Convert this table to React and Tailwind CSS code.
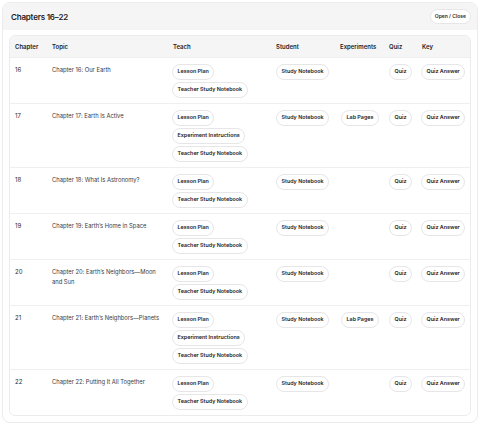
const rows = [
  { n: "16", topic: "Chapter 16: Our Earth", teach: ["Lesson Plan", "Teacher Study Notebook"], lab: false },
  { n: "17", topic: "Chapter 17: Earth Is Active", teach: ["Lesson Plan", "Experiment Instructions", "Teacher Study Notebook"], lab: true },
  { n: "18", topic: "Chapter 18: What Is Astronomy?", teach: ["Lesson Plan", "Teacher Study Notebook"], lab: false },
  { n: "19", topic: "Chapter 19: Earth’s Home in Space", teach: ["Lesson Plan", "Teacher Study Notebook"], lab: false },
  { n: "20", topic: "Chapter 20: Earth’s Neighbors—Moon and Sun", teach: ["Lesson Plan", "Teacher Study Notebook"], lab: false },
  { n: "21", topic: "Chapter 21: Earth’s Neighbors—Planets", teach: ["Lesson Plan", "Experiment Instructions", "Teacher Study Notebook"], lab: true },
  { n: "22", topic: "Chapter 22: Putting It All Together", teach: ["Lesson Plan", "Teacher Study Notebook"], lab: false },
];

const cols = "grid grid-cols-[37px_121px_103px_64px_49px_33px_55px]";

function Pill({ children }) {
  return (
    <span className="inline-flex h-4 items-center rounded-full border border-[#e6e6e8] bg-white px-[4.5px] text-[5.4px] font-semibold leading-none text-[#1c1c1f] whitespace-nowrap">
      {children}
    </span>
  );
}

export default function App() {
  return (
    <div className="bg-white p-[2px] font-['Inter',sans-serif] text-[#1c1c1f]">
      <div className="overflow-hidden rounded-lg border border-[#ececee] bg-white">
        {/* header bar */}
        <div className="flex h-[27px] items-center justify-between bg-[#f5f5f6] pl-[8px] pr-[6px]">
          <h2 className="text-[8px] font-semibold tracking-tight">Chapters 16–22</h2>
          <button className="flex h-[15px] items-center rounded-full border border-[#e6e6e8] bg-white px-[4px] text-[5px] font-semibold text-[#2a2a2e]">
            Open / Close
          </button>
        </div>

        <div className="px-[6px] pb-[6px] pt-[5px]">
          <div className="overflow-hidden rounded-md border border-[#ececee]">
            <div className={`${cols} h-[21px] items-center bg-[#f5f5f6] text-[6px] font-semibold`}>
              <div className="pl-[5px]">Chapter</div>
              <div className="pl-[5px]">Topic</div>
              <div className="pl-[5px]">Teach</div>
              <div className="pl-[5px]">Student</div>
              <div className="pl-[5px]">Experiments</div>
              <div className="pl-[5px]">Quiz</div>
              <div className="pl-[5px]">Key</div>
            </div>
            {rows.map((r) => (
              <div key={r.n} className={`${cols} border-t border-[#efeff1] pb-[5px] pt-[6px] text-[6px]`}>
                <div className="pl-[5px] pt-[1px] leading-[10px] text-[#2a2a2e]">{r.n}</div>
                <div className="pl-[5px] pr-[2px] pt-[1px] text-[5.8px] leading-[10px] text-[#3a3a40]">{r.topic}</div>
                <div className="flex flex-col items-start gap-[2px] pl-[4px]">
                  {r.teach.map((t) => (
                    <Pill key={t}>{t}</Pill>
                  ))}
                </div>
                <div className="pl-[5px]">
                  <Pill>Study Notebook</Pill>
                </div>
                <div className="pl-[6px]">{r.lab && <Pill>Lab Pages</Pill>}</div>
                <div className="pl-[5px]">
                  <Pill>Quiz</Pill>
                </div>
                <div className="pl-[4px]">
                  <Pill>Quiz Answer</Pill>
                </div>
              </div>
            ))}
          </div>
        </div>
      </div>
    </div>
  );
}
